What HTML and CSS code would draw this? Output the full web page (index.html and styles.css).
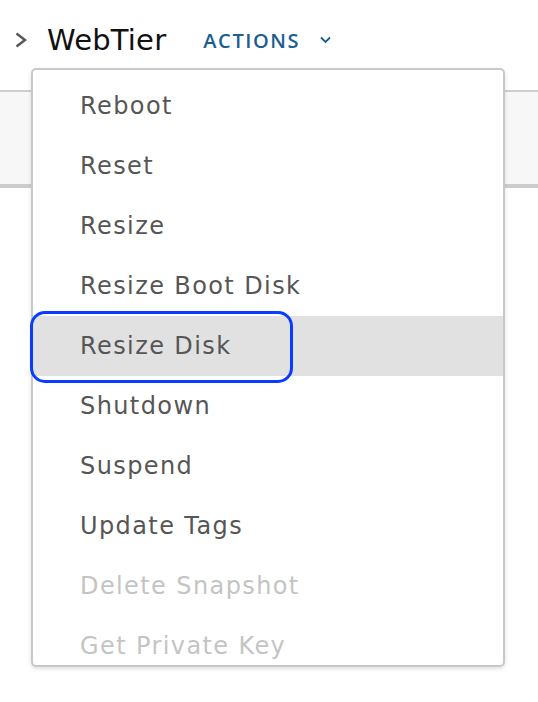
FILE: index.html
```html
<!DOCTYPE html>
<html>
<head>
<meta charset="utf-8">
<link rel="stylesheet" href="styles.css">
</head>
<body>
<div class="page">
  <header class="header">
    <svg class="caret" width="12" height="16" viewBox="0 0 12 16"><path d="M1.5 1.5 L10 8 L1.5 14.5" fill="none" stroke="#555" stroke-width="2.4"/></svg>
    <span class="title">WebTier</span>
    <span class="actions">ACTIONS
      <svg class="chev" width="11" height="8" viewBox="0 0 11 8"><path d="M1 1.5 L5.5 6 L10 1.5" fill="none" stroke="#1b5e91" stroke-width="1.8"/></svg>
    </span>
  </header>
  <div class="band"></div>
  <div class="menu">
    <div class="item">Reboot</div>
    <div class="item">Reset</div>
    <div class="item">Resize</div>
    <div class="item">Resize Boot Disk</div>
    <div class="item active">Resize Disk</div>
    <div class="item">Shutdown</div>
    <div class="item">Suspend</div>
    <div class="item">Update Tags</div>
    <div class="item disabled">Delete Snapshot</div>
    <div class="item disabled">Get Private Key</div>
  </div>
</div>
</body>
</html>
```
FILE: styles.css
```css
html, body {
  margin: 0;
  padding: 0;
  background: #fff;
}
.page {
  position: relative;
  width: 538px;
  height: 702px;
  overflow: hidden;
  font-family: "DejaVu Sans", "Open Sans", sans-serif;
}
.header {
  display: flex;
  align-items: center;
  padding-left: 15px;
  box-sizing: border-box;
  height: 90px;
  padding-bottom: 10px;
}
.caret {
  display: block;
  margin-right: 20px;
}
.title {
  font-size: 29px;
  letter-spacing: 0.2px;
  color: #111;
  margin-right: 37px;
}
.actions {
  font-family: "Open Sans", sans-serif;
  font-size: 20px;
  font-weight: 600;
  letter-spacing: 1.6px;
  color: #1b5e91;
  display: flex;
  align-items: center;
}
.chev {
  margin-left: 20px;
}
.band {
  height: 98px;
  box-sizing: border-box;
  border-top: 2px solid #cfcfcf;
  border-bottom: 4px solid #cccccc;
  background: #f7f7f7;
}
.menu {
  position: absolute;
  left: 31px;
  top: 68px;
  width: 474px;
  height: 599px;
  box-sizing: border-box;
  border: 2px solid #c8c8c8;
  border-radius: 5px;
  background: #fff;
  box-shadow: 0 2px 4px rgba(0,0,0,0.12);
  padding-top: 6px;
}
.item {
  position: relative;
  height: 60px;
  line-height: 60px;
  padding-left: 47px;
  font-size: 24px;
  letter-spacing: 1.4px;
  color: #565656;
  white-space: nowrap;
}
.item:nth-child(10) {
  height: 55px;
  overflow: hidden;
}
.item.active {
  background: #e1e1e1;
}
.item.active::after {
  content: "";
  position: absolute;
  left: -3px;
  top: -5px;
  width: 263px;
  height: 72px;
  box-sizing: border-box;
  border: 3.5px solid #0a3cff;
  border-radius: 15px;
}
.item.disabled {
  color: #c4c4c4;
}
```
